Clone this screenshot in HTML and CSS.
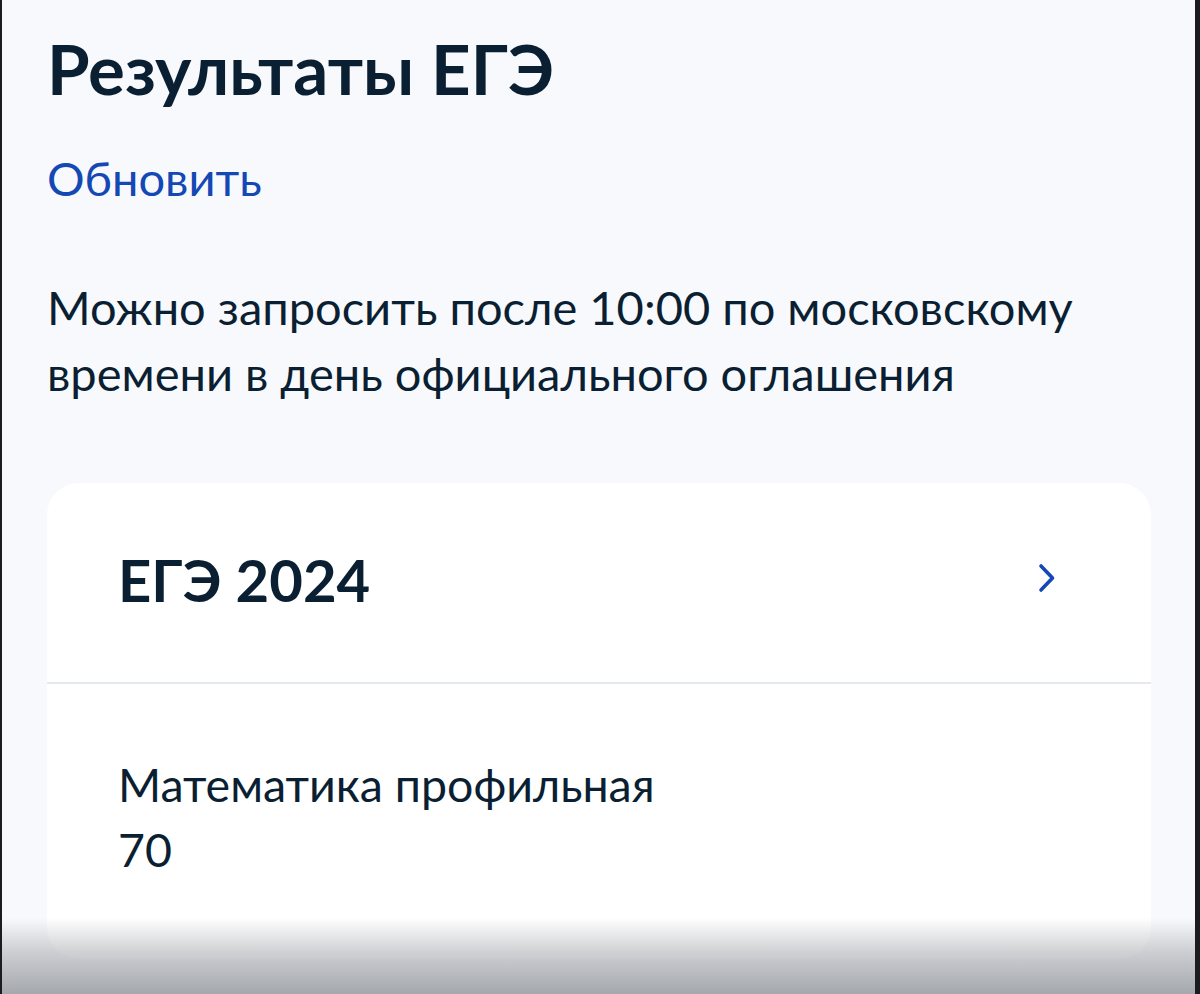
FILE: index.html
```html
<!DOCTYPE html>
<html>
<head>
 <title>Результаты ЕГЭ</title>
 <link rel="stylesheet" href="styles.css">
</head>
<body>
 <div class="screen">
 <div class="page">
 <h1>Результаты ЕГЭ</h1>
 <a class="refresh" href="#">Обновить</a>
 <p class="note">Можно запросить после 10:00 по московскому времени в день официального оглашения</p>

 <div class="card">
 <div class="card-head">
 <span class="card-title">ЕГЭ 2024</span>
 <svg class="chevron" width="20" height="32" viewBox="0 0 20 32">
 <path d="M4 4 L15.5 16 L4 28" fill="none" stroke="#1448b5" stroke-width="3.6" stroke-linecap="round" stroke-linejoin="round"/>
 </svg>
 </div>
 <div class="card-body">
 <div class="subject">Математика профильная</div>
 <div class="score">70</div>
 </div>
 </div>
 </div>
 <!-- bottom fade -->
 <div class="fade"></div>
 </div>
</body>
</html>
```

FILE: styles.css
```css
/* page */
body {
margin: 0;
background-color: #1c1c1e;
font-family: Lato, "Open Sans", sans-serif;
color: #0b1f33;
}
.screen {
position: relative;
height: 994px;
margin-left: 2px;
margin-right: 5px;
background-color: #f8f9fc;
overflow: hidden;
}
.page {
padding: 26px 0 0 45px;
width: 1104px;
}
h1 {
margin: 0;
font-size: 69px;
line-height: 86px;
font-weight: 700;
}
.refresh {
display: block;
margin-top: 38px;
font-size: 47px;
line-height: 56px;
color: #1448b5;
text-decoration: none;
}
.note {
margin: 68px 0 0;
font-size: 47px;
line-height: 66px;
}
.card {
margin-top: 77px;
background-color: #fff;
border-radius: 32px;
}
.card-head {
display: flex;
align-items: center;
justify-content: space-between;
height: 193px;
padding: 0 94px 6px 71px;
border-bottom: 2px solid #e4e9ef;
}
.card-title {
font-size: 58px;
font-weight: 700;
}
.chevron {
display: block;
margin-top: -4px;
}
.card-body {
padding: 68px 71px 77px;
font-size: 46.5px;
line-height: 65px;
}
.fade {
position: absolute;
left: 0;
right: 0;
bottom: 0;
height: 76px;
background: linear-gradient(to bottom, rgba(168, 171, 176, 0) 0%, rgba(168, 171, 176, 0.55) 45%, rgba(160, 163, 169, 0.95) 100%);
}
```
